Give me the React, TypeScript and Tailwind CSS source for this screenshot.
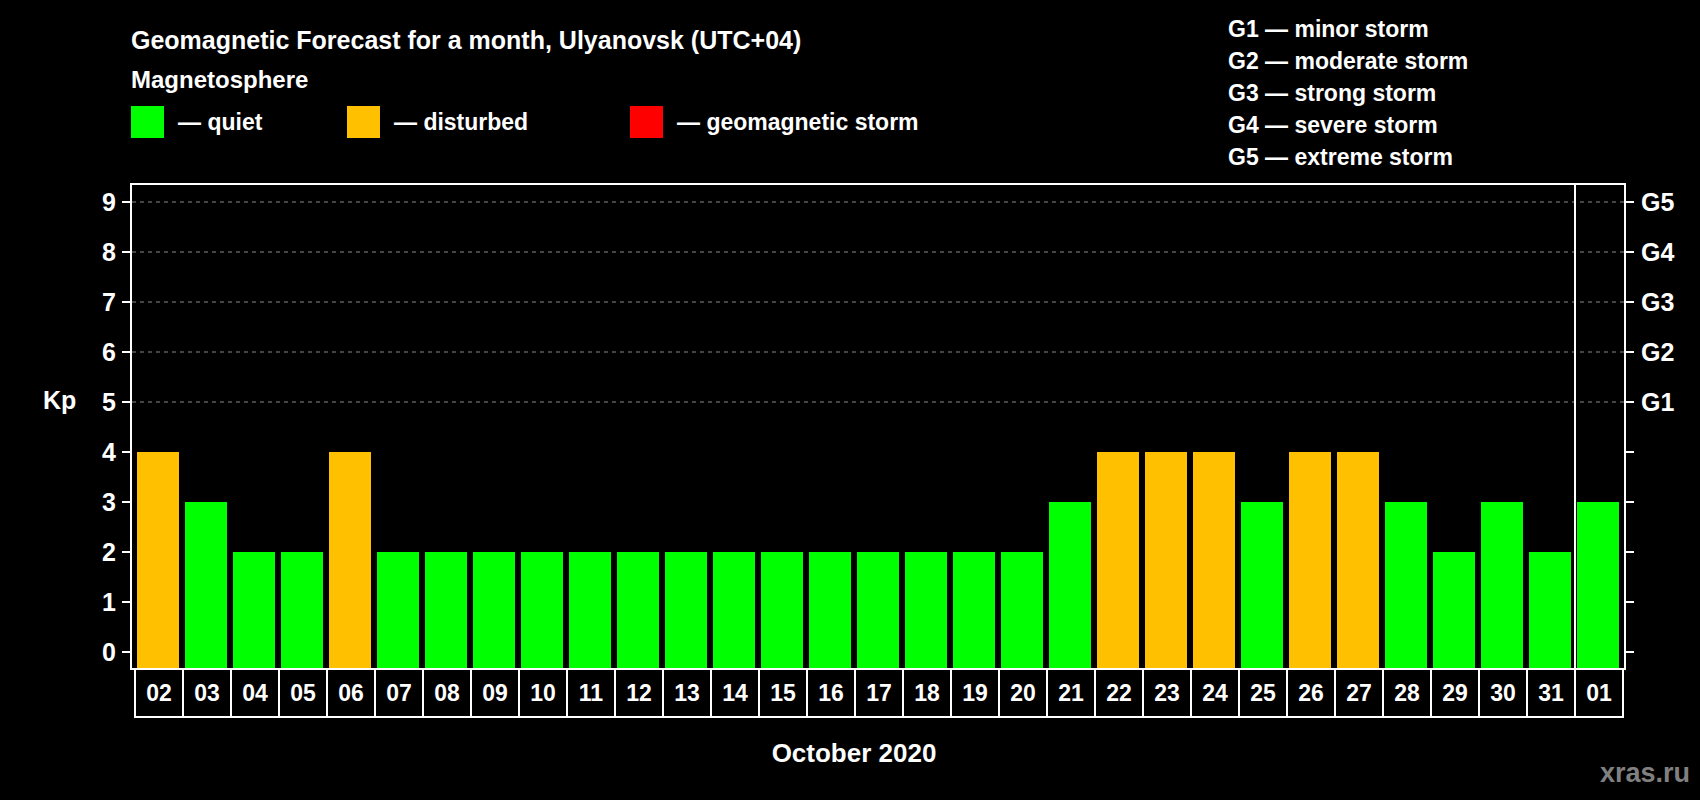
import React from "react";

const kp = [4,3,2,2,4,2,2,2,2,2,2,2,2,2,2,2,2,2,2,3,4,4,4,3,4,4,3,2,3,2,3];
const days = ["02","03","04","05","06","07","08","09","10","11","12","13","14","15","16","17","18","19","20","21","22","23","24","25","26","27","28","29","30","31","01"];
const F = "'Liberation Sans', Arial, sans-serif";

export default function App() {
  const y0 = 652;
  return (
    <div className="w-[1700px] h-[800px] bg-black text-white overflow-hidden" style={{ fontFamily: F }}>
      <div className="flex h-[175px]">
        <div className="pl-[131px] pt-[25px] w-[1228px] font-bold">
          <div className="text-[25px] leading-[30px]">Geomagnetic Forecast for a month, Ulyanovsk (UTC+04)</div>
          <div className="text-[24px] leading-[30px] mt-[10px]">Magnetosphere</div>
          <div className="flex items-center mt-[10px] text-[23px]">
            <div className="w-[33px] h-[32px] bg-[#00ff00]" />
            <span className="ml-[14px] w-[169px]">— quiet</span>
            <div className="w-[33px] h-[32px] bg-[#ffc000]" />
            <span className="ml-[14px] w-[236px]">— disturbed</span>
            <div className="w-[33px] h-[32px] bg-[#ff0000]" />
            <span className="ml-[14px]">— geomagnetic storm</span>
          </div>
        </div>
        <div className="pt-[13px] font-bold text-[23px] leading-[32px]">
          <div>G1 — minor storm</div>
          <div>G2 — moderate storm</div>
          <div>G3 — strong storm</div>
          <div>G4 — severe storm</div>
          <div>G5 — extreme storm</div>
        </div>
      </div>
      <svg width="1700" height="625" viewBox="0 175 1700 625" style={{ fontFamily: F }}>
        {[5,6,7,8,9].map(k => (
          <line key={k} x1={132} x2={1624} y1={y0 - 50*k} y2={y0 - 50*k} stroke="#8a8a8a" strokeWidth={1} strokeDasharray="4 4" />
        ))}
        {kp.map((v, i) => (
          <rect key={i} x={137 + 48*i} y={y0 - 50*v} width={42} height={668 - (y0 - 50*v)} fill={v >= 4 ? "#ffc000" : "#00ff00"} />
        ))}
        <rect x={131} y={184} width={1494} height={485} fill="none" stroke="#fff" strokeWidth={2} />
        <line x1={1575} x2={1575} y1={184} y2={717} stroke="#fff" strokeWidth={2} />
        {Array.from({ length: 10 }, (_, k) => (
          <g key={k}>
            <line x1={122} x2={131} y1={y0 - 50*k} y2={y0 - 50*k} stroke="#fff" strokeWidth={2} />
            <line x1={1625} x2={1634} y1={y0 - 50*k} y2={y0 - 50*k} stroke="#fff" strokeWidth={2} />
            <text x={116} y={y0 - 50*k + 9} fill="#fff" fontSize={25} fontWeight="bold" textAnchor="end">{k}</text>
          </g>
        ))}
        {[1,2,3,4,5].map(g => (
          <text key={g} x={1641} y={y0 - 50*(g+4) + 9} fill="#fff" fontSize={25} fontWeight="bold">G{g}</text>
        ))}
        <text x={43} y={409} fill="#fff" fontSize={25} fontWeight="bold">Kp</text>
        <rect x={135} y={669} width={1488} height={48} fill="none" stroke="#fff" strokeWidth={2} />
        {days.map((d, i) => (
          <g key={d + i}>
            {i > 0 && <line x1={135 + 48*i} x2={135 + 48*i} y1={669} y2={717} stroke="#fff" strokeWidth={2} />}
            <text x={135 + 48*i + 24} y={701} fill="#fff" fontSize={23} fontWeight="bold" textAnchor="middle">{d}</text>
          </g>
        ))}
        <text x={854} y={762} fill="#fff" fontSize={26} fontWeight="bold" textAnchor="middle">October 2020</text>
        <text x={1690} y={782} fill="#808080" fontSize={27} fontWeight="bold" textAnchor="end">xras.ru</text>
      </svg>
    </div>
  );
}
